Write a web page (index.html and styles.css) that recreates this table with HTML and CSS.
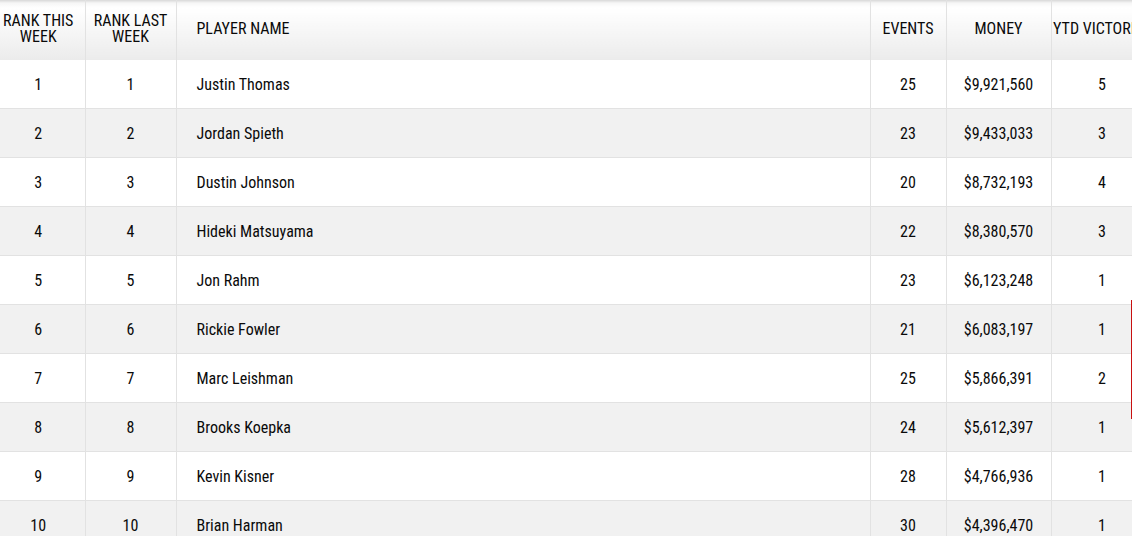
FILE: index.html
```html
<!DOCTYPE html>
<html>
<head>
<meta charset="utf-8">
<link rel="stylesheet" href="styles.css">
</head>
<body>
<div class="wrap">
<table class="rank">
<colgroup>
<col class="c1"><col class="c2"><col class="c3"><col class="c4"><col class="c5"><col class="c6">
</colgroup>
<thead>
<tr>
<th class="first">RANK THIS WEEK</th>
<th>RANK LAST WEEK</th>
<th class="name">PLAYER NAME</th>
<th>EVENTS</th>
<th>MONEY</th>
<th class="nowrap">YTD VICTORIES</th>
</tr>
</thead>
<tbody>
<tr><td class="first">1</td><td>1</td><td class="name">Justin Thomas</td><td>25</td><td>$9,921,560</td><td>5</td></tr>
<tr><td class="first">2</td><td>2</td><td class="name">Jordan Spieth</td><td>23</td><td>$9,433,033</td><td>3</td></tr>
<tr><td class="first">3</td><td>3</td><td class="name">Dustin Johnson</td><td>20</td><td>$8,732,193</td><td>4</td></tr>
<tr><td class="first">4</td><td>4</td><td class="name">Hideki Matsuyama</td><td>22</td><td>$8,380,570</td><td>3</td></tr>
<tr><td class="first">5</td><td>5</td><td class="name">Jon Rahm</td><td>23</td><td>$6,123,248</td><td>1</td></tr>
<tr><td class="first">6</td><td>6</td><td class="name">Rickie Fowler</td><td>21</td><td>$6,083,197</td><td>1</td></tr>
<tr><td class="first">7</td><td>7</td><td class="name">Marc Leishman</td><td>25</td><td>$5,866,391</td><td>2</td></tr>
<tr><td class="first">8</td><td>8</td><td class="name">Brooks Koepka</td><td>24</td><td>$5,612,397</td><td>1</td></tr>
<tr><td class="first">9</td><td>9</td><td class="name">Kevin Kisner</td><td>28</td><td>$4,766,936</td><td>1</td></tr>
<tr><td class="first">10</td><td>10</td><td class="name">Brian Harman</td><td>30</td><td>$4,396,470</td><td>1</td></tr>
</tbody>
</table>
<div class="marker"></div>
</div>
</body>
</html>
```

FILE: styles.css
```css
html, body {
  margin: 0;
  padding: 0;
  background: #fff;
  overflow: hidden;
}
.wrap {
  position: relative;
  width: 1132px;
  height: 536px;
  overflow: hidden;
}
.rank {
  border-collapse: collapse;
  table-layout: fixed;
  width: 1153px;
  font-family: "Roboto Condensed", Roboto, "Liberation Sans", sans-serif;
  font-stretch: condensed;
  font-size: 16px;
  color: #0a0a0a;
}
.c1 { width: 85px; }
.c2 { width: 91px; }
.c3 { width: 694px; }
.c4 { width: 76px; }
.c5 { width: 105px; }
.c6 { width: 102px; }
.rank th {
  height: 60px;
  padding: 0 1px 2px;
  font-weight: 400;
  line-height: 16px;
  text-align: center;
  vertical-align: middle;
  border-right: 1px solid #e2e2e2;
  background: linear-gradient(to bottom, #d8d8d8 0px, #f6f6f6 3px, #ffffff 8px, #f3f3f3 40px, #ebebeb 60px);
  box-sizing: border-box;
}
.rank th.nowrap { white-space: nowrap; }
.rank td {
  height: 48px;
  padding: 0 1px;
  text-align: center;
  vertical-align: middle;
  border-right: 1px solid #e2e2e2;
  border-bottom: 1px solid #e2e2e2;
}
.rank th.first, .rank td.first {
  padding-left: 0;
  padding-right: 8px;
}
.rank th.name, .rank td.name {
  text-align: left;
  padding-left: 20px;
}
.rank tbody tr:nth-child(even) td {
  background: #f1f1f1;
}
.marker {
  position: absolute;
  right: 0;
  top: 300px;
  width: 1px;
  height: 119px;
  background: #c81010;
}
```
